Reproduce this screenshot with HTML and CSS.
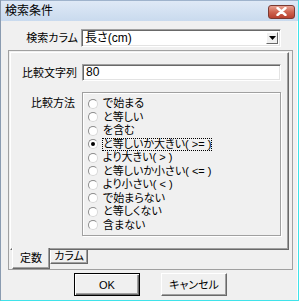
FILE: index.html
```html
<!DOCTYPE html>
<html lang="ja">
<head>
    <meta charset="UTF-8">
    <title>検索条件</title>
    <link rel="stylesheet" href="styles.css">
</head>
<body>
    <div class="window">
        <div class="titlebar">
            <span class="title">検索条件</span>
            <span class="close-btn">
                <svg width="11" height="9" viewBox="0 0 11 9">
                    <path d="M1.5 1 L9.5 8 M9.5 1 L1.5 8" stroke="#fff" stroke-width="2.4" stroke-linecap="round"/>
                </svg>
            </span>
        </div>
        <div class="client">
            <div class="top-row">
                <label class="lbl">検索カラム</label>
                <div class="combo">
                    <span class="combo-text">長さ(cm)</span>
                    <span class="combo-btn">
                        <svg width="7" height="4" viewBox="0 0 7 4"><path d="M0 0 H7 L3.5 4 Z" fill="#000"/></svg>
                    </span>
                </div>
            </div>
            <!-- tab control framed by a thin line -->
            <div class="frame">
                <div class="tabpage">
                    <div class="page-row">
                        <label class="lbl">比較文字列</label>
                        <div class="textbox">80</div>
                    </div>
                    <div class="page-row method-row">
                        <label class="lbl method-lbl">比較方法</label>
                        <div class="groupbox">
                            <div class="radio"><span class="circle"></span><span class="rtext">で始まる</span></div>
                            <div class="radio"><span class="circle"></span><span class="rtext">と等しい</span></div>
                            <div class="radio"><span class="circle"></span><span class="rtext">を含む</span></div>
                            <div class="radio checked"><span class="circle"></span><span class="rtext focus">と等しいか大きい( &gt;= )</span></div>
                            <div class="radio"><span class="circle"></span><span class="rtext">より大きい( &gt; )</span></div>
                            <div class="radio"><span class="circle"></span><span class="rtext">と等しいか小さい( &lt;= )</span></div>
                            <div class="radio"><span class="circle"></span><span class="rtext">より小さい( &lt; )</span></div>
                            <div class="radio"><span class="circle"></span><span class="rtext">で始まらない</span></div>
                            <div class="radio"><span class="circle"></span><span class="rtext">と等しくない</span></div>
                            <div class="radio"><span class="circle"></span><span class="rtext">含まない</span></div>
                        </div>
                    </div>
                </div>
                <div class="tabs">
                    <div class="tab active">定数</div>
                    <div class="tab">カラム</div>
                </div>
            </div>
            <div class="buttons">
                <button class="btn default">OK</button>
                <button class="btn">キャンセル</button>
            </div>
        </div>
    </div>
</body>
</html>
```

FILE: styles.css
```css
html, body {
    margin: 0;
    padding: 0;
    background: #fff;
}
body {
    width: 300px;
    height: 302px;
    overflow: hidden;
    font-family: "Liberation Sans", "Noto Sans CJK JP", sans-serif;
    font-size: 11px;
    font-feature-settings: "palt";
    color: #000;
}
.window {
    width: 299px;
    height: 301px;
    box-sizing: border-box;
    border-left: 1px solid #8a9bb0;
    border-right: 1px solid #3fe3ea;
    border-bottom: 1px solid #3fe3ea;
    display: flex;
    flex-direction: column;
}
/* Title bar */
.titlebar {
    height: 21px;
    flex: none;
    box-sizing: border-box;
    border-top: 1px solid #9fb3cc;
    background: linear-gradient(#dfe9f6, #c9daee);
    display: flex;
    align-items: center;
    justify-content: space-between;
    padding: 0 3px 0 4px;
}
.title {
    font-size: 12px;
    line-height: 14px;
}
.close-btn {
    width: 27px;
    height: 14px;
    box-sizing: border-box;
    border: 1px solid #7a3a33;
    border-radius: 3px;
    background: linear-gradient(#e8a293, #cf6450 50%, #b8412f);
    display: flex;
    align-items: center;
    justify-content: center;
    margin-top: 1px;
}
/* Client area */
.client {
    flex: 1;
    background: #f0f0f0;
    border-right: 1px solid #fff;
    display: flex;
    flex-direction: column;
    padding-top: 8px;
}
.lbl {
    text-align: right;
    line-height: 14px;
    white-space: nowrap;
}
.top-row {
    display: grid;
    grid-template-columns: 77px 200px;
    column-gap: 3px;
    align-items: center;
}
.combo {
    height: 18px;
    box-sizing: border-box;
    border: 1px solid;
    border-color: #a0a0a0 #fff #fff #a0a0a0;
    box-shadow: inset 1px 1px 0 #696969, inset -1px -1px 0 #e3e3e3;
    background: #fff;
    display: flex;
    align-items: center;
    justify-content: space-between;
    padding: 0 2px 0 3px;
}
.combo-text {
    line-height: 14px;
    font-size: 12px;
}
.combo-btn {
    width: 12px;
    height: 12px;
    box-sizing: border-box;
    background: #f0f0f0;
    border: 1px solid;
    border-color: #fff #696969 #696969 #fff;
    display: flex;
    align-items: center;
    justify-content: center;
}
/* Frame around the tab control */
.frame {
    margin: 3px 0 0 7px;
    width: 285px;
    height: 220px;
    box-sizing: border-box;
    border: 1px solid #a0a0a0;
    padding: 1px 3px 0 1px;
    display: flex;
    flex-direction: column;
}
.tabpage {
    height: 198px;
    box-sizing: border-box;
    border-top: 1px solid #fff;
    border-left: 1px solid #fff;
    border-right: 1px solid #696969;
    border-bottom: 1px solid #696969;
    box-shadow: inset -1px -1px 0 #a0a0a0;
    padding-top: 11px;
    display: flex;
    flex-direction: column;
    gap: 11px;
}
.page-row {
    display: grid;
    grid-template-columns: 66px 199px;
    column-gap: 5px;
    align-items: center;
}
.textbox {
    height: 17px;
    box-sizing: border-box;
    border: 1px solid;
    border-color: #a0a0a0 #fff #fff #a0a0a0;
    box-shadow: inset 1px 1px 0 #696969, inset -1px -1px 0 #e3e3e3;
    background: #fff;
    padding-left: 3px;
    line-height: 14px;
    font-size: 12px;
}
.method-row {
    align-items: start;
}
.method-lbl {
    margin-top: 4px;
    padding-right: 2px;
}
.groupbox {
    height: 144px;
    box-sizing: border-box;
    border: 1px solid #a0a0a0;
    box-shadow: 1px 1px 0 #fff, inset 1px 1px 0 #fff;
    padding: 4px 0 0 5px;
}
.radio {
    height: 13.5px;
    display: flex;
    align-items: center;
    gap: 5px;
}
.circle {
    width: 10px;
    height: 10px;
    box-sizing: border-box;
    border-radius: 50%;
    border: 1px solid;
    border-color: #8c8c8c #d8d8d8 #d8d8d8 #8c8c8c;
    background: #fff;
    display: flex;
    align-items: center;
    justify-content: center;
    flex: none;
}
.radio.checked .circle::after {
    content: "";
    width: 4px;
    height: 4px;
    border-radius: 50%;
    background: #000;
}
.rtext {
    line-height: 11px;
    white-space: nowrap;
    border: 1px solid transparent;
    margin-left: -1px;
}
.rtext.focus {
    border: 1px dotted #000;
}
/* Tabs at the bottom */
.tabs {
    display: flex;
    padding-left: 2px;
}
.tab {
    width: 38px;
    box-sizing: border-box;
    text-align: center;
    line-height: 12px;
    height: 14px;
    border-left: 1px solid #fff;
    border-right: 1px solid #696969;
    border-bottom: 1px solid #696969;
    box-shadow: inset -1px -1px 0 #a0a0a0;
    background: #f0f0f0;
}
.tab.active {
    height: 21px;
    margin-top: -2px;
    padding-top: 4px;
    position: relative;
}
/* Dialog buttons */
.buttons {
    display: flex;
    justify-content: center;
    gap: 21px;
    margin-top: 3px;
    padding-left: 3px;
}
.btn {
    width: 66px;
    height: 23px;
    box-sizing: border-box;
    font-family: inherit;
    font-size: 11px;
    font-feature-settings: "palt";
    color: #000;
    background: #f0f0f0;
    border: 1px solid;
    border-color: #fff #696969 #696969 #fff;
    box-shadow: inset -1px -1px 0 #a0a0a0;
    padding: 0;
    line-height: 14px;
}
.btn.default {
    border: 1px solid #000;
    box-shadow: inset 1px 1px 0 #fff, inset -1px -1px 0 #696969, inset -2px -2px 0 #a0a0a0;
}
```
